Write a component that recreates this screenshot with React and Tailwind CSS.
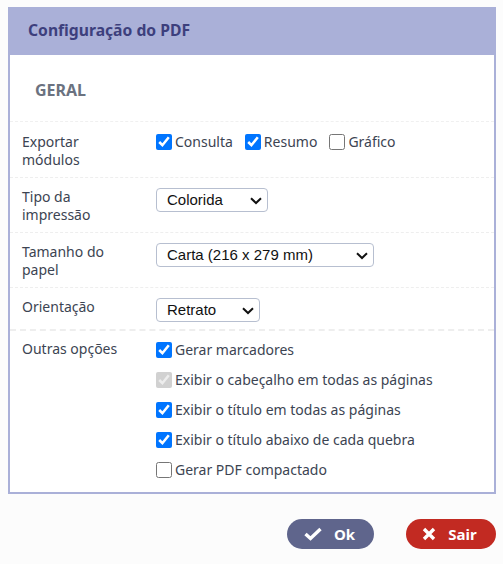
import React from "react";

const Check = ({ label, checked, disabled }) => (
  <label className="flex items-center gap-[3px] whitespace-nowrap">
    <input type="checkbox" defaultChecked={checked} disabled={disabled} className="w-4 h-4 m-0" />
    <span>{label}</span>
  </label>
);

const Select = ({ w, children }) => (
  <div className={`${w} relative h-6`}>
    <select className="appearance-none w-full h-6 bg-white border border-[#b7bfd0] rounded-[4px] pl-[10px] text-[15px] leading-[22px] text-[#111] font-['Liberation_Sans',sans-serif]">
      {children}
    </select>
    <svg className="absolute right-[6px] top-[9px] pointer-events-none" width="12" height="8" viewBox="0 0 12 8" fill="none" stroke="#111" strokeWidth="2">
      <path d="M1 1.2 L6 6 L11 1.2" />
    </svg>
  </div>
);

const Row = ({ label, children, className }) => (
  <div className={`flex px-3 ${className}`}>
    <div className="w-[134px] shrink-0 leading-[18px]">{label}</div>
    <div className="flex-1">{children}</div>
  </div>
);

export default function App() {
  return (
    <div className="w-[503px] h-[564px] bg-[#fcfcfc] pt-[7px] px-2 font-['Noto_Sans',sans-serif] text-[14px] text-[#3c4452]">
      <div className="w-[488px] h-[487px] border-x-2 border-b-2 border-[#aab0d8] bg-white">
        <div className="-mx-[2px] h-[48px] bg-[#aab0d8] flex items-center pl-[20px] text-[15.7px] font-bold text-[#3d3f7d]">
          Configuração do PDF
        </div>
        <div className="h-[67px] flex items-center pt-[3px] pl-[25px] text-[16px] font-bold text-[#6b7280] border-b border-dashed border-[#f0f0f0]">
          GERAL
        </div>
        <Row label={<>Exportar<br />módulos</>} className="h-[56px] pt-[11px] border-b border-dashed border-[#eeeeee]">
          <div className="flex gap-3 leading-[18px]">
            <Check label="Consulta" checked />
            <Check label="Resumo" checked />
            <Check label="Gráfico" />
          </div>
        </Row>
        <Row label={<>Tipo da<br />impressão</>} className="h-[55px] pt-[10px] border-b border-dashed border-[#eeeeee]">
          <Select w="w-[112px]"><option>Colorida</option></Select>
        </Row>
        <Row label={<>Tamanho do<br />papel</>} className="h-[55px] pt-[10px] border-b border-dashed border-[#eeeeee]">
          <Select w="w-[218px]"><option>Carta (216 x 279 mm)</option></Select>
        </Row>
        <Row label="Orientação" className="h-[43px] pt-[10px] border-b-2 border-dashed border-[#eeeeee]">
          <Select w="w-[104px]"><option>Retrato</option></Select>
        </Row>
        <Row label="Outras opções" className="pt-[9px]">
          <div className="flex flex-col gap-[12px] leading-[18px] pt-[1px]">
            <Check label="Gerar marcadores" checked />
            <Check label="Exibir o cabeçalho em todas as páginas" checked disabled />
            <Check label="Exibir o título em todas as páginas" checked />
            <Check label="Exibir o título abaixo de cada quebra" checked />
            <Check label="Gerar PDF compactado" />
          </div>
        </Row>
      </div>
      <div className="flex justify-end gap-8 mt-[25px] w-[488px]">
        <button className="w-[87px] h-[30px] rounded-full bg-[#5f658c] text-white font-bold text-[15px] flex items-center justify-center gap-[12px] pr-[2px]">
          <svg width="18" height="14" viewBox="0 0 18 14" fill="none" stroke="white" strokeWidth="3.4"><path d="M1.5 7 L6.5 11.5 L16.5 2" /></svg>
          Ok
        </button>
        <button className="w-[90px] h-[30px] rounded-full bg-[#c22a22] text-white font-bold text-[15px] flex items-center justify-center gap-[12px] pr-[3px]">
          <svg width="14" height="14" viewBox="0 0 14 14" fill="none" stroke="white" strokeWidth="3.4"><path d="M2 2 L12 12 M12 2 L2 12" /></svg>
          Sair
        </button>
      </div>
    </div>
  );
}
